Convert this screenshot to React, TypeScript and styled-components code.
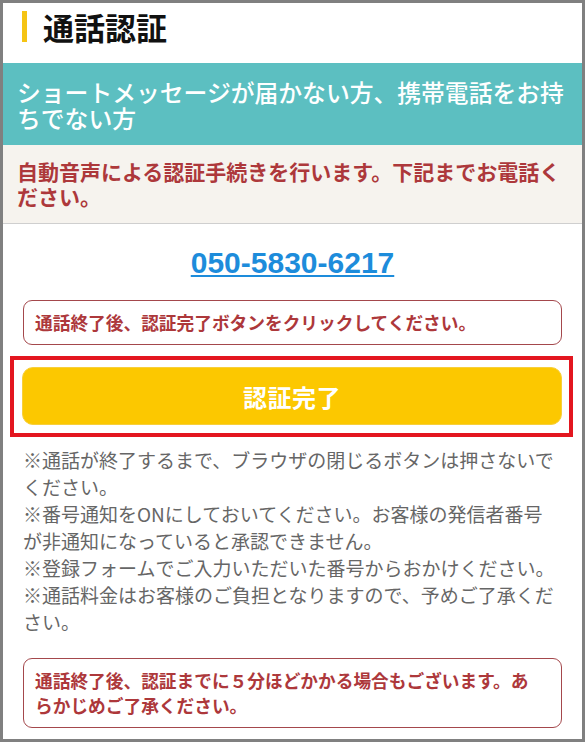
import { FC } from 'react';
import styled, { createGlobalStyle } from 'styled-components';

const GlobalStyle = createGlobalStyle`
  html, body {
    margin: 0;
    padding: 0;
    background: #fff;
  }
  body {
    font-family: "Noto Sans CJK JP", "Noto Sans", sans-serif;
  }
`;

const notes = [
  '※通話が終了するまで、ブラウザの閉じるボタンは押さないでください。',
  '※番号通知をONにしておいてください。お客様の発信者番号が非通知になっていると承認できません。',
  '※登録フォームでご入力いただいた番号からおかけください。',
  '※通話料金はお客様のご負担となりますので、予めご了承ください。',
];

const App: FC = () => (
  <>
    <GlobalStyle />
    <Frame>
      <Header>
        <TitleBar />
        <Title>通話認証</Title>
      </Header>

      <Lead>ショートメッセージが届かない方、携帯電話をお持ちでない方</Lead>

      <Instruction>
        自動音声による認証手続きを行います。下記までお電話ください。
      </Instruction>

      <PhoneRow>
        <PhoneLink href="#">050-5830-6217</PhoneLink>
      </PhoneRow>

      <NoticeBox>通話終了後、認証完了ボタンをクリックしてください。</NoticeBox>

      <Highlight>
        <DoneButton type="button">認証完了</DoneButton>
      </Highlight>

      <Notes>
        {notes.map(note => (
          <li key={note}>{note}</li>
        ))}
      </Notes>

      <NoticeBox $wide>
        通話終了後、認証までに５分ほどかかる場合もございます。あらかじめご了承ください。
      </NoticeBox>
    </Frame>
  </>
);

export default App;

const Frame = styled.div`
  box-sizing: border-box;
  width: 585px;
  height: 742px;
  border: 3px solid #808080;
  background: #fff;
  overflow: hidden;
`;

const Header = styled.div`
  display: flex;
  align-items: center;
  gap: 16px;
  height: 60px;
  box-sizing: border-box;
  padding: 8px 0 21px 19px;
`;

const TitleBar = styled.span`
  width: 5px;
  height: 31px;
  background: #f5c414;
`;

const Title = styled.h1`
  margin: 0;
  font-size: 31px;
  line-height: 31px;
  font-weight: 700;
  color: #111;
`;

const Lead = styled.p`
  margin: 0;
  padding: 16px 10px 14px 14px;
  background: #5cbfc1;
  color: #fff;
  font-size: 23.8px;
  line-height: 26px;
  font-weight: 500;
`;

const Instruction = styled.p`
  margin: 0;
  padding: 14px 18px 14px 14px;
  background: #f6f3ee;
  border-bottom: 1px solid #cfcfcf;
  color: #ad383b;
  font-size: 21px;
  line-height: 25px;
  font-weight: 700;
`;

const PhoneRow = styled.div`
  display: flex;
  justify-content: center;
  margin-top: 24px;
`;

const PhoneLink = styled.a`
  font-family: "Liberation Sans", Arial, sans-serif;
  font-size: 30px;
  line-height: 30px;
  font-weight: 700;
  color: #1d8cdb;
  text-decoration: underline;
  text-decoration-thickness: 2px;
  text-underline-offset: 2px;
`;

const NoticeBox = styled.div<{ $wide?: boolean }>`
  margin: ${({ $wide }) => ($wide ? '23px 20px 0' : '22px 20px 0')};
  padding: 9px ${({ $wide }) => ($wide ? '21px' : '11px')} 9px 11px;
  border: 1px solid #a4484c;
  border-radius: 9px;
  color: #ad383b;
  font-size: 17.7px;
  line-height: 25px;
  font-weight: 700;
`;

const Highlight = styled.div`
  margin: 11px 9px 0 7px;
  padding: 7px 7px 8px 8px;
  border: 4px solid #e3161f;
`;

const DoneButton = styled.button`
  display: block;
  width: 100%;
  height: 58px;
  border: 1px solid #f7cf3c;
  border-radius: 11px;
  background: #fcc800;
  color: #fff;
  font-family: "Noto Sans CJK JP", sans-serif;
  font-size: 24px;
  font-weight: 700;
  letter-spacing: 0.5px;
  cursor: pointer;
`;

const Notes = styled.ul`
  list-style: none;
  margin: 9px 0 0;
  padding: 0 22px 0 20px;
  color: #666;
  font-size: 19px;
  line-height: 27px;

  li {
    margin: 0;
  }
`;
